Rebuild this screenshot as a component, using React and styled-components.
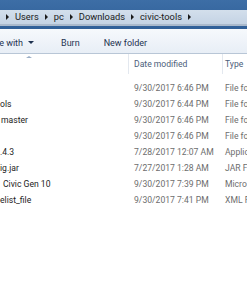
import React from "react";
import styled, { createGlobalStyle } from "styled-components";

const Global = createGlobalStyle`
  html, body { margin: 0; padding: 0; background: #ffffff; }
  body { font-family: Roboto, "Open Sans", sans-serif; }
`;

const Window = styled.div`
  width: 247px;
  height: 296px;
  overflow: hidden;
  display: flex;
  flex-direction: column;
  background: #ffffff;
`;

const Frame = styled.div`
  background: linear-gradient(#3d6ea6, #2f5f98);
  padding: 10px 0 3px 0;
`;

const AddressBar = styled.div`
  height: 14px;
  background: linear-gradient(#d3dfec, #c4d3e4);
  border-bottom: 2px solid #a9b9cc;
  display: flex;
  align-items: center;
  padding-left: 6px;
  gap: 6px;
  font-size: 9.3px;
  color: #1b1b1b;
  white-space: nowrap;
`;

const Crumb = styled.span`
  line-height: 14px;
`;

const Chevron = styled.span`
  width: 0;
  height: 0;
  border-top: 3px solid transparent;
  border-bottom: 3px solid transparent;
  border-left: 3px solid #1b1b1b;
  flex: none;
`;

const Toolbar = styled.div`
  height: 25px;
  box-sizing: border-box;
  padding-top: 3px;
  background: linear-gradient(#f6f9fc, #e8eef6);
  border-bottom: 1px solid #b8c6d6;
  display: flex;
  align-items: center;
  font-size: 9px;
  color: #1e3250;
  white-space: nowrap;
`;

const ToolButton = styled.span`
  display: inline-flex;
  align-items: center;
  gap: 5px;
  margin-left: ${(p) => p.$ml || 0}px;
`;

const DropArrow = styled.span`
  width: 0;
  height: 0;
  border-left: 3px solid transparent;
  border-right: 3px solid transparent;
  border-top: 3px solid #1e3250;
`;

const Pane = styled.div`
  flex: 1;
  display: flex;
  flex-direction: column;
  background: #ffffff;
  font-size: 8.6px;
`;

const cols = "128px 94px 1fr";

const HeaderRow = styled.div`
  position: relative;
  display: grid;
  grid-template-columns: ${cols};
  height: 20px;
  color: #4c607a;
  white-space: nowrap;
`;

const HeaderCell = styled.div`
  display: flex;
  align-items: center;
  padding-left: ${(p) => p.$pad || 0}px;
  border-left: ${(p) => (p.$first ? "none" : "1px solid #e3e8ef")};
  overflow: hidden;
`;

const SortArrow = styled.span`
  position: absolute;
  left: 26px;
  top: 2px;
  width: 0;
  height: 0;
  border-left: 3px solid transparent;
  border-right: 3px solid transparent;
  border-bottom: 2px solid #9aaec6;
`;

const List = styled.div`
  padding-top: 6px;
  display: flex;
  flex-direction: column;
`;

const Row = styled.div`
  display: grid;
  grid-template-columns: ${cols};
  height: 16px;
  align-items: center;
  white-space: nowrap;
`;

const NameCell = styled.div`
  color: #1b1b1b;
  overflow: hidden;
  padding-left: ${(p) => p.$x || 0}px;
`;

const DateCell = styled.div`
  color: #6d6d6d;
  padding-left: 6px;
  overflow: hidden;
`;

const TypeCell = styled.div`
  color: #6d6d6d;
  padding-left: 3px;
  overflow: hidden;
`;

const rows = [
  { name: "", x: 0, date: "9/30/2017 6:46 PM", type: "File folder" },
  { name: "ols", x: 0, date: "9/30/2017 6:44 PM", type: "File folder" },
  { name: "master", x: 1, date: "9/30/2017 6:46 PM", type: "File folder" },
  { name: "", x: 0, date: "9/30/2017 6:46 PM", type: "File folder" },
  { name: ".4.3", x: 0, date: "7/28/2017 12:07 AM", type: "Application" },
  { name: "ig.jar", x: 0, date: "7/27/2017 1:28 AM", type: "JAR File" },
  { name: "Civic Gen 10", x: 3, date: "9/30/2017 7:39 PM", type: "Microsoft" },
  { name: "elist_file", x: 0, date: "9/30/2017 7:41 PM", type: "XML File" },
];

export default function App() {
  return (
    <Window>
      <Global />
      <Frame>
        <AddressBar>
          <Chevron />
          <Crumb>Users</Crumb>
          <Chevron />
          <Crumb>pc</Crumb>
          <Chevron />
          <Crumb>Downloads</Crumb>
          <Chevron />
          <Crumb>civic-tools</Crumb>
          <Chevron />
        </AddressBar>
      </Frame>
      <Toolbar>
        <ToolButton $ml={-19}>
          Share with <DropArrow />
        </ToolButton>
        <ToolButton $ml={27}>Burn</ToolButton>
        <ToolButton $ml={24}>New folder</ToolButton>
      </Toolbar>
      <Pane>
        <HeaderRow>
          <SortArrow />
          <HeaderCell $first />
          <HeaderCell $pad={5}>Date modified</HeaderCell>
          <HeaderCell $pad={2}>Type</HeaderCell>
        </HeaderRow>
        <List>
          {rows.map((r, i) => (
            <Row key={i}>
              <NameCell $x={r.x}>{r.name}</NameCell>
              <DateCell>{r.date}</DateCell>
              <TypeCell>{r.type}</TypeCell>
            </Row>
          ))}
        </List>
      </Pane>
    </Window>
  );
}
